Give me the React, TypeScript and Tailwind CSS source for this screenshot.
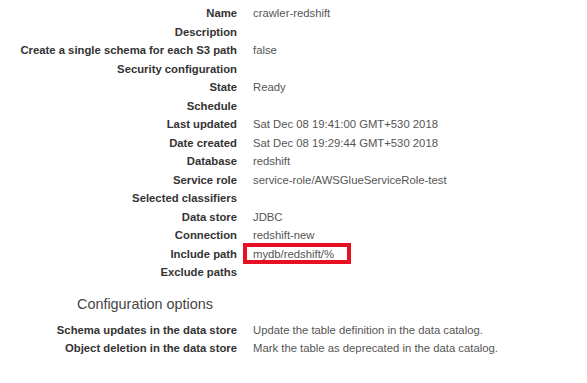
const details: [string, string][] = [
  ["Name", "crawler-redshift"],
  ["Description", ""],
  ["Create a single schema for each S3 path", "false"],
  ["Security configuration", ""],
  ["State", "Ready"],
  ["Schedule", ""],
  ["Last updated", "Sat Dec 08 19:41:00 GMT+530 2018"],
  ["Date created", "Sat Dec 08 19:29:44 GMT+530 2018"],
  ["Database", "redshift"],
  ["Service role", "service-role/AWSGlueServiceRole-test"],
  ["Selected classifiers", ""],
  ["Data store", "JDBC"],
  ["Connection", "redshift-new"],
  ["Include path", "mydb/redshift/%"],
  ["Exclude paths", ""],
];

const options: [string, string][] = [
  ["Schema updates in the data store", "Update the table definition in the data catalog."],
  ["Object deletion in the data store", "Mark the table as deprecated in the data catalog."],
];

function DetailRows({ rows, highlight }: { rows: [string, string][]; highlight?: string }) {
  return (
    <div className="grid grid-cols-[237px_1fr] gap-x-4">
      {rows.map(([label, value]) => (
        <div key={label} className="contents">
          <div className="text-right font-bold text-[#333] leading-[18.5px] whitespace-nowrap">{label}</div>
          <div className="relative text-[#555] leading-[18.5px] whitespace-nowrap">
            {value}
            {label === highlight && (
              <div className="absolute left-[-10px] top-[-1.5px] w-[108px] h-[21px] border-4 border-[#e81123]" />
            )}
          </div>
        </div>
      ))}
    </div>
  );
}

export default function App() {
  return (
    <div
      className="w-[587px] h-[383px] bg-white pt-[4px] text-[11.3px]"
      style={{ fontFamily: '"Liberation Sans", Arial, sans-serif' }}
    >
      <DetailRows rows={details} highlight="Include path" />
      <h3 className="mt-[12px] pl-[77px] text-[14.4px] leading-[20px] text-[#444] font-normal">
        Configuration options
      </h3>
      <div className="mt-[7px]">
        <DetailRows rows={options} />
      </div>
    </div>
  );
}
